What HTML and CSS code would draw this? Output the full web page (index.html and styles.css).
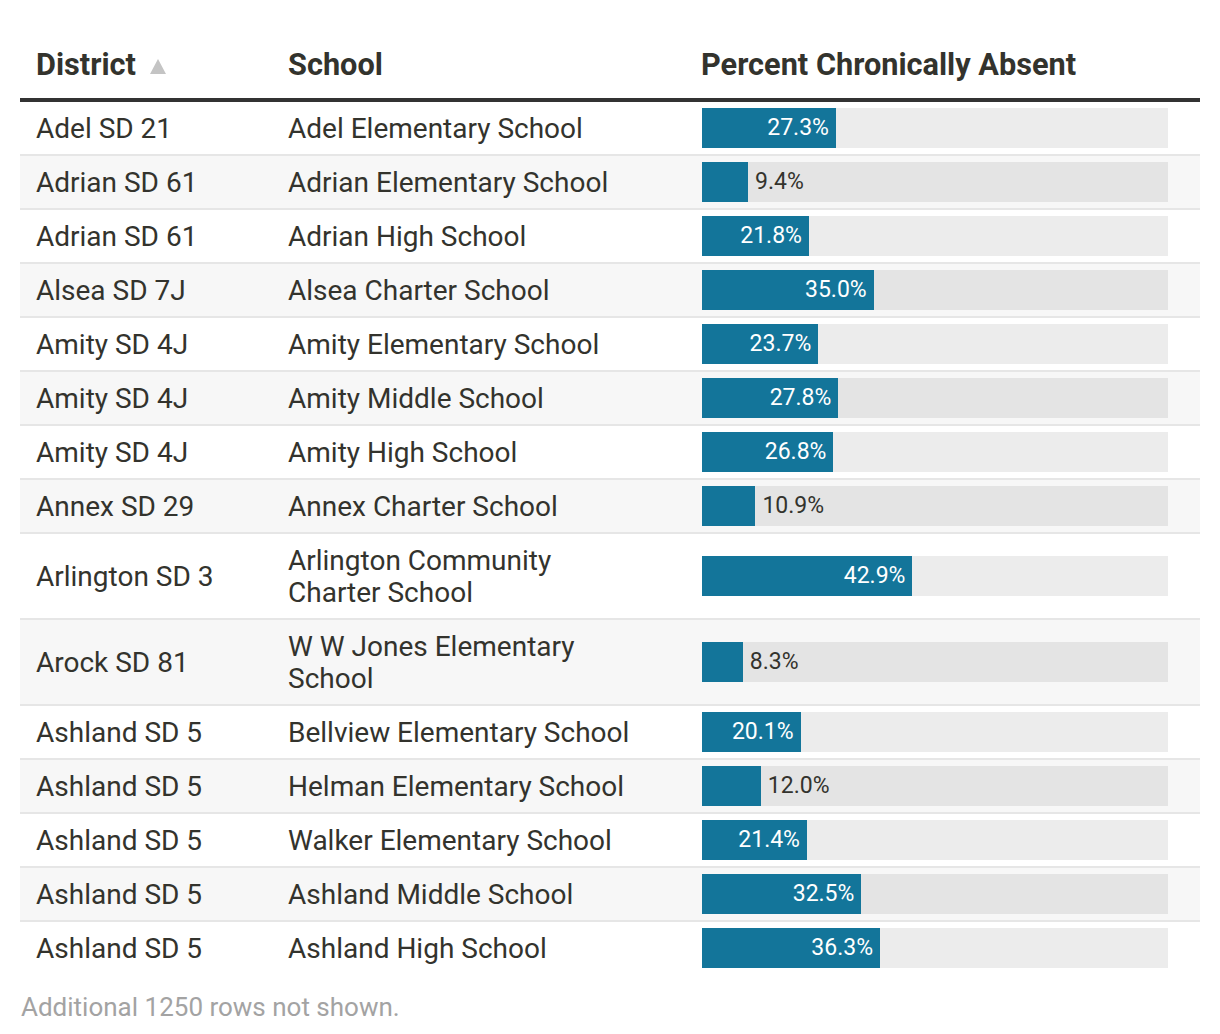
FILE: index.html
```html
<!DOCTYPE html>
<html>
<head>
<meta charset="utf-8">
<link rel="stylesheet" href="styles.css">
</head>
<body>
<div class="wrap">
  <table class="tbl">
    <thead>
      <tr>
        <th class="c-district">District <span class="sort"></span></th>
        <th class="c-school">School</th>
        <th class="c-pct">Percent Chronically Absent</th>
      </tr>
    </thead>
    <tbody>
      <tr><td>Adel SD 21</td><td>Adel Elementary School</td><td class="c-pct"><div class="track"><div class="fill" style="width:28.74%"><span class="in">27.3%</span></div></div></td></tr>
      <tr><td>Adrian SD 61</td><td>Adrian Elementary School</td><td class="c-pct"><div class="track"><div class="fill" style="width:9.89%"></div><span class="out">9.4%</span></div></td></tr>
      <tr><td>Adrian SD 61</td><td>Adrian High School</td><td class="c-pct"><div class="track"><div class="fill" style="width:22.95%"><span class="in">21.8%</span></div></div></td></tr>
      <tr><td>Alsea SD 7J</td><td>Alsea Charter School</td><td class="c-pct"><div class="track"><div class="fill" style="width:36.84%"><span class="in">35.0%</span></div></div></td></tr>
      <tr><td>Amity SD 4J</td><td>Amity Elementary School</td><td class="c-pct"><div class="track"><div class="fill" style="width:24.95%"><span class="in">23.7%</span></div></div></td></tr>
      <tr><td>Amity SD 4J</td><td>Amity Middle School</td><td class="c-pct"><div class="track"><div class="fill" style="width:29.26%"><span class="in">27.8%</span></div></div></td></tr>
      <tr><td>Amity SD 4J</td><td>Amity High School</td><td class="c-pct"><div class="track"><div class="fill" style="width:28.21%"><span class="in">26.8%</span></div></div></td></tr>
      <tr><td>Annex SD 29</td><td>Annex Charter School</td><td class="c-pct"><div class="track"><div class="fill" style="width:11.47%"></div><span class="out">10.9%</span></div></td></tr>
      <tr><td>Arlington SD 3</td><td>Arlington Community<br>Charter School</td><td class="c-pct"><div class="track"><div class="fill" style="width:45.16%"><span class="in">42.9%</span></div></div></td></tr>
      <tr><td>Arock SD 81</td><td>W W Jones Elementary<br>School</td><td class="c-pct"><div class="track"><div class="fill" style="width:8.74%"></div><span class="out">8.3%</span></div></td></tr>
      <tr><td>Ashland SD 5</td><td>Bellview Elementary School</td><td class="c-pct"><div class="track"><div class="fill" style="width:21.16%"><span class="in">20.1%</span></div></div></td></tr>
      <tr><td>Ashland SD 5</td><td>Helman Elementary School</td><td class="c-pct"><div class="track"><div class="fill" style="width:12.63%"></div><span class="out">12.0%</span></div></td></tr>
      <tr><td>Ashland SD 5</td><td>Walker Elementary School</td><td class="c-pct"><div class="track"><div class="fill" style="width:22.53%"><span class="in">21.4%</span></div></div></td></tr>
      <tr><td>Ashland SD 5</td><td>Ashland Middle School</td><td class="c-pct"><div class="track"><div class="fill" style="width:34.21%"><span class="in">32.5%</span></div></div></td></tr>
      <tr><td>Ashland SD 5</td><td>Ashland High School</td><td class="c-pct"><div class="track"><div class="fill" style="width:38.21%"><span class="in">36.3%</span></div></div></td></tr>
    </tbody>
  </table>
  <div class="note">Additional 1250 rows not shown.</div>
</div>
</body>
</html>
```

FILE: styles.css
```css
html, body {
  margin: 0;
  padding: 0;
  background: #ffffff;
}

body {
  font-family: Roboto, "Liberation Sans", sans-serif;
  color: #33332d;
}

.wrap {
  padding: 20px 20px 0 20px;
}

.tbl {
  width: 1180px;
  border-collapse: collapse;
  table-layout: fixed;
}

.tbl th {
  font-size: 30.7px;
  font-weight: 700;
  line-height: 32px;
  text-align: left;
  padding: 29px 16px 17px 16px;
  border-bottom: 4px solid #333333;
  color: #33332d;
}

.c-district { width: 220px; }
.c-school { width: 381px; }

.sort {
  display: inline-block;
  width: 0;
  height: 0;
  border-left: 8px solid transparent;
  border-right: 8px solid transparent;
  border-bottom: 15px solid #c4c4c4;
  margin-left: 6px;
  vertical-align: 1px;
}

.tbl td {
  font-size: 28px;
  line-height: 32px;
  padding: 11px 16px 9px 16px;
  vertical-align: middle;
  border-bottom: 2px solid #e6e6e6;
}

.tbl td.c-pct {
  padding: 6px 32px 6px 17px;
}

.tbl tbody tr:nth-child(even) {
  background: #f7f7f7;
}

.tbl tbody tr:last-child td {
  border-bottom: none;
}

.track {
  height: 40px;
  background: rgba(0, 0, 0, 0.075);
  display: flex;
  align-items: center;
}

.fill {
  height: 40px;
  background: #13759a;
  display: flex;
  align-items: center;
  justify-content: flex-end;
  flex-shrink: 0;
}

.in {
  color: #ffffff;
  font-size: 23px;
  line-height: 40px;
  padding-right: 7px;
}

.out {
  color: #33332d;
  font-size: 23px;
  line-height: 40px;
  padding-left: 7px;
}

.note {
  font-size: 26px;
  line-height: 30px;
  color: #a3a3a3;
  padding-top: 18px;
  padding-left: 1px;
}
```
